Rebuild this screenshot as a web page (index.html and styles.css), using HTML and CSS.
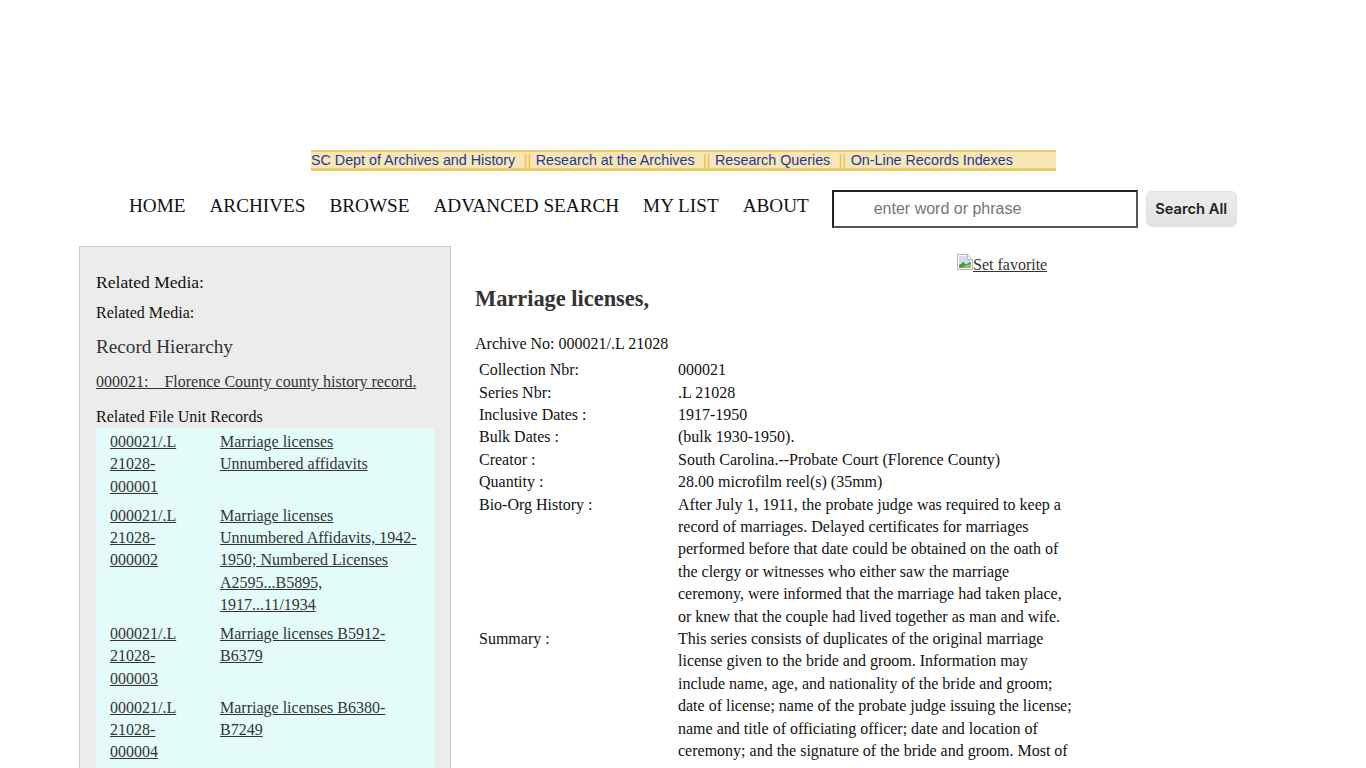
FILE: index.html
```html
<!DOCTYPE html>
<html lang="en">
<head>
<meta charset="utf-8">
<title>Marriage licenses</title>
<link rel="stylesheet" href="styles.css">
</head>
<body>
<div class="topbar-wrap">
  <div class="topbar">
    <a href="#">SC Dept of Archives and History</a><span class="sep">||</span><a href="#">Research at the Archives</a><span class="sep">||</span><a href="#">Research Queries</a><span class="sep">||</span><a href="#">On-Line Records Indexes</a>
  </div>
</div>
<nav class="mainnav">
  <a href="#">HOME</a>
  <a href="#">ARCHIVES</a>
  <a href="#">BROWSE</a>
  <a href="#">ADVANCED SEARCH</a>
  <a href="#">MY LIST</a>
  <a href="#">ABOUT</a>
  <form class="search">
    <input class="search-input" type="text" placeholder="enter word or phrase">
    <button class="search-btn" type="button">Search All</button>
  </form>
</nav>
<div class="columns">
  <aside class="side">
    <div class="side-h1">Related Media:</div>
    <div class="side-h2">Related Media:</div>
    <div class="side-h3">Record Hierarchy</div>
    <a class="parent" href="#">000021:&nbsp;&nbsp;&nbsp; Florence County county history record.</a>
    <div class="side-h4">Related File Unit Records</div>
    <div class="units">
      <div class="unit"><a href="#">000021/.L 21028-000001</a><a href="#">Marriage licenses Unnumbered affidavits</a></div>
      <div class="unit"><a href="#">000021/.L 21028-000002</a><a href="#">Marriage licenses Unnumbered Affidavits, 1942-1950; Numbered Licenses A2595...B5895, 1917...11/1934</a></div>
      <div class="unit"><a href="#">000021/.L 21028-000003</a><a href="#">Marriage licenses B5912-B6379</a></div>
      <div class="unit"><a href="#">000021/.L 21028-000004</a><a href="#">Marriage licenses B6380-B7249</a></div>
    </div>
  </aside>
  <main class="content">
    <div class="fav"><a href="#"><svg class="broken" width="16" height="16" viewBox="0 0 16 16"><path d="M.5.5h10l5 5v10H.5z" fill="#fff" stroke="#b4b4b4"/><path d="M10.5.5v5h5" fill="#f0f0f0" stroke="#b4b4b4"/><path d="M2 2h8v4h4v3H2z" fill="#d3d9f2"/><path d="M2 14v-3l4-3 3 2 5-2v6z" fill="#4c9a3a"/><path d="M5 14l4-3 5-1v4z" fill="#8cc46e"/></svg>Set favorite</a></div>
    <h1 class="title">Marriage licenses,</h1>
    <div class="archive">Archive No: 000021/.L 21028</div>
    <dl class="details">
      <dt>Collection Nbr:</dt><dd>000021</dd>
      <dt>Series Nbr:</dt><dd>.L 21028</dd>
      <dt>Inclusive Dates :</dt><dd>1917-1950</dd>
      <dt>Bulk Dates :</dt><dd>(bulk 1930-1950).</dd>
      <dt>Creator :</dt><dd>South Carolina.--Probate Court (Florence County)</dd>
      <dt>Quantity :</dt><dd>28.00 microfilm reel(s) (35mm)</dd>
      <dt>Bio-Org History :</dt><dd>After July 1, 1911, the probate judge was required to keep a record of marriages. Delayed certificates for marriages performed before that date could be obtained on the oath of the clergy or witnesses who either saw the marriage ceremony, were informed that the marriage had taken place, or knew that the couple had lived together as man and wife.</dd>
      <dt>Summary :</dt><dd>This series consists of duplicates of the original marriage license given to the bride and groom. Information may include name, age, and nationality of the bride and groom; date of license; name of the probate judge issuing the license; name and title of officiating officer; date and location of ceremony; and the signature of the bride and groom. Most of</dd>
    </dl>
  </main>
</div>
</body>
</html>
```
FILE: styles.css
```css
html, body {
  margin: 0;
  padding: 0;
  height: 768px;
  overflow: hidden;
  background: #fff;
}
body {
  font-family: "Liberation Serif", "Times New Roman", serif;
  font-size: 16px;
  color: #111;
}
a { color: #333; }
.topbar-wrap {
  padding: 150px 0 0 311px;
}
.topbar {
  width: 745px;
  height: 16px;
  background: #f8e5b8;
  border-top: 2px solid #f0c96a;
  border-bottom: 3px solid #e9cb66;
  font-family: "Liberation Sans", Arial, sans-serif;
  font-size: 14.3px;
  line-height: 17px;
  white-space: nowrap;
}
.topbar a { color: #1f3a93; text-decoration: none; }
.sep { color: #f0b840; margin: 0 4.5px 0 8.5px; }
.mainnav {
  display: flex;
  align-items: flex-start;
  padding: 19px 0 0 129px;
  height: 75px;
  box-sizing: border-box;
}
.mainnav > a {
  color: #111;
  text-decoration: none;
  font-size: 19.2px;
  line-height: 32px;
  margin-right: 24px;
}
.search { display: flex; align-items: flex-start; }
.search-input {
  width: 306px;
  height: 38px;
  box-sizing: border-box;
  border: 2px solid;
  border-color: #222 #555 #555 #222;
  padding: 0 0 0 40px;
  margin-left: -1px;
  font-family: "Liberation Sans", Arial, sans-serif;
  font-size: 16px;
  background: #fff;
}
.search-input::placeholder { color: #757575; opacity: 1; }
.search-btn {
  margin: 1px 0 0 8px;
  width: 91px;
  height: 36px;
  border: 1px solid #e0e0e0;
  border-radius: 6px;
  background: linear-gradient(#ececec, #e2e2e2);
  color: #222;
  font-family: Inter, "Liberation Sans", sans-serif;
  font-weight: 600;
  font-size: 14.7px;
  padding: 0 0 1px;
}
.columns {
  display: flex;
  align-items: flex-start;
  padding: 0 0 0 79px;
}
.side {
  width: 372px;
  box-sizing: border-box;
  height: 540px;
  background: #ececec;
  border: 1px solid #ccc;
  padding: 24px 16px 0;
  flex: none;
}
.side-h1 { font-size: 17.6px; line-height: 22px; color: #111; }
.side-h2 { font-size: 16px; line-height: 22px; margin-top: 9px; color: #111; }
.side-h3 { font-size: 19.2px; line-height: 24px; margin-top: 11px; color: #333; }
.parent { display: block; font-size: 16px; line-height: 22px; margin-top: 12px; }
.side-h4 { font-size: 16px; line-height: 22px; margin-top: 13px; color: #111; }
.units {
  background: #e3fcfa;
  padding: 3px 14px 20px;
  width: 338px;
  box-sizing: border-box;
}
.unit {
  display: grid;
  grid-template-columns: 110px 1fr;
  line-height: 22.4px;
  margin-bottom: 6.4px;
}
.unit a:first-child { width: 80px; }
.content {
  width: 600px;
  margin-left: 24px;
  flex: none;
}
.fav { padding: 8px 0 0 482px; line-height: 22px; white-space: nowrap; }
.broken { vertical-align: 0; }
.title {
  font-size: 22.4px;
  font-weight: 700;
  line-height: 26px;
  margin: 10px 0 0;
  color: #333;
}
.archive { margin-top: 21px; line-height: 22px; }
.details {
  display: grid;
  grid-template-columns: 199px 396px;
  margin: 4.2px 0 0 4px;
  line-height: 22.4px;
}
.details dt, .details dd { margin: 0; }
```
